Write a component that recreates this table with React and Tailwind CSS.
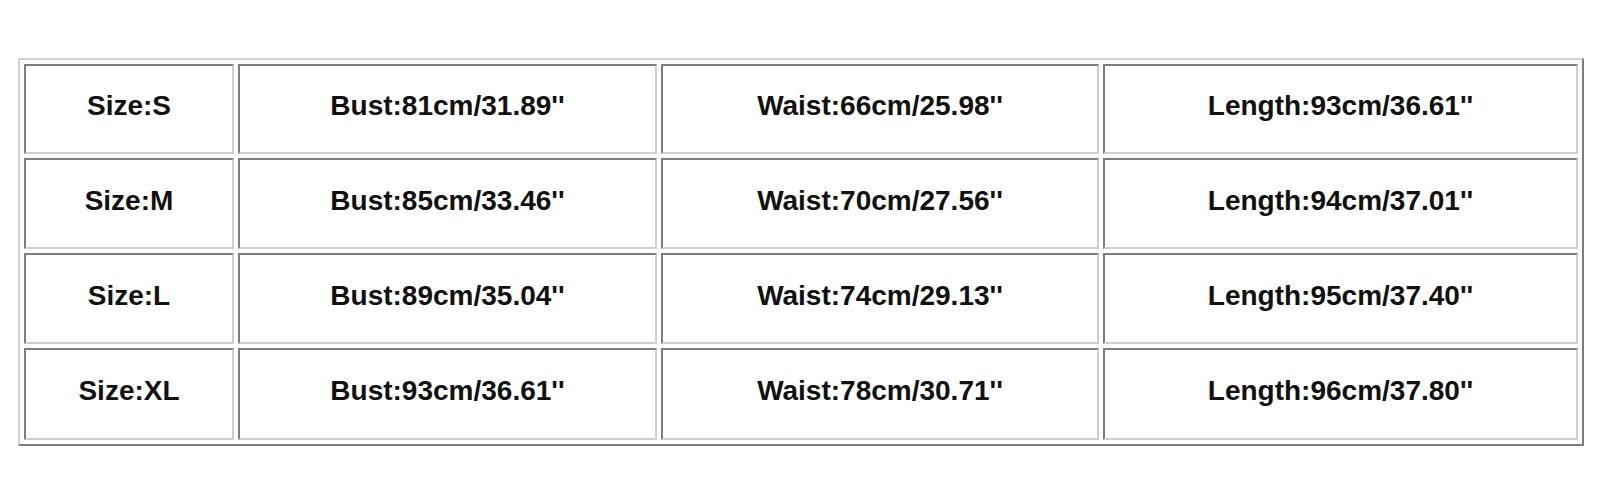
import React from "react";

const rows = [
  ["Size:S", "Bust:81cm/31.89''", "Waist:66cm/25.98''", "Length:93cm/36.61''"],
  ["Size:M", "Bust:85cm/33.46''", "Waist:70cm/27.56''", "Length:94cm/37.01''"],
  ["Size:L", "Bust:89cm/35.04''", "Waist:74cm/29.13''", "Length:95cm/37.40''"],
  ["Size:XL", "Bust:93cm/36.61''", "Waist:78cm/30.71''", "Length:96cm/37.80''"],
];

export default function App() {
  return (
    <div className="w-[1600px] h-[500px] bg-white pt-[58px] pl-[18px] font-['Liberation_Sans',Arial,sans-serif]">
      <div className="grid w-[1566px] grid-cols-[210px_419px_438px_475px] grid-rows-[90px_91px_91px_92px] gap-[4px] p-[4px] border-2 border-t-[#cfcfcf] border-l-[#cfcfcf] border-r-[#7d7d7d] border-b-[#7d7d7d]">
        {rows.map((row, i) =>
          row.map((cell, j) => (
            <div
              key={i + "-" + j}
              className="flex items-center justify-center border-2 border-t-[#7d7d7d] border-l-[#7d7d7d] border-r-[#cfcfcf] border-b-[#cfcfcf] text-[28px] font-bold text-[#111] pb-[6px]"
            >
              {cell}
            </div>
          ))
        )}
      </div>
    </div>
  );
}
